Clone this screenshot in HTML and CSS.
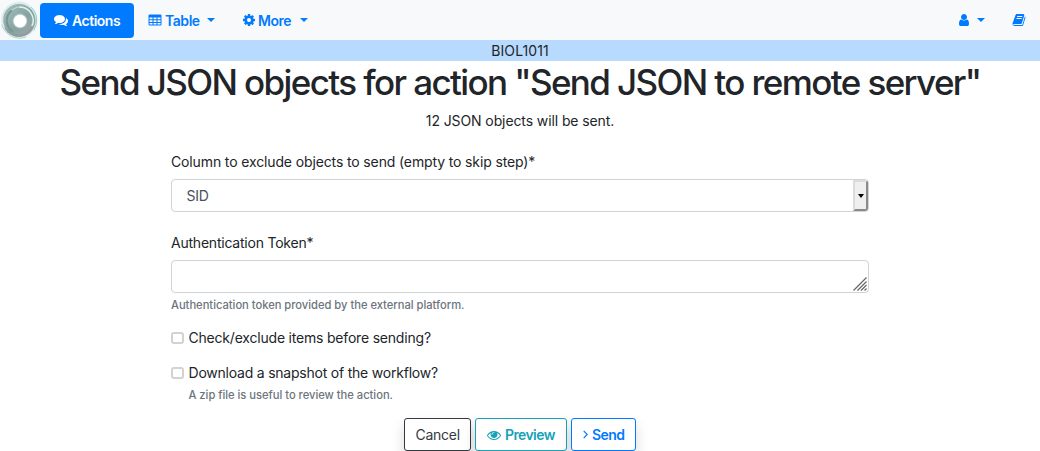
FILE: index.html
```html
<!DOCTYPE html>
<html lang="en">
<head>
<meta charset="utf-8">
<title>Send JSON objects</title>
<link rel="stylesheet" href="styles.css">
</head>
<body>
<nav class="navbar">
  <svg class="logo" viewBox="0 0 40 40">
    <defs><radialGradient id="halo"><stop offset=".82" stop-color="#cfeee8"/><stop offset="1" stop-color="#f8f9fa"/></radialGradient>
    <linearGradient id="ring" x1="0" y1="0" x2="1" y2="1"><stop offset="0" stop-color="#a7c3c0"/><stop offset=".55" stop-color="#84a3a1"/><stop offset="1" stop-color="#a9a9ad"/></linearGradient></defs>
    <circle cx="19.5" cy="20" r="19" fill="url(#halo)"/>
    <circle cx="19" cy="20.5" r="16.5" fill="url(#ring)"/>
    <g fill="none" stroke-linecap="round">
      <path d="M4 27A17 17 0 0 1 28 5" stroke="#dcebe9" stroke-width="1.6"/>
      <path d="M7 22A13 13 0 0 1 28 10" stroke="#c8dbd9" stroke-width="1"/>
      <path d="M20 7A13.500 13.500 0 0 1 32 26" stroke="#e1efed" stroke-width="1.500"/>
      <path d="M11 11A13 13 0 0 0 12 31" stroke="#7a9291" stroke-width="2"/>
      <path d="M31 7A18 18 0 0 1 34 30" stroke="#8fd3c5" stroke-width="1"/>
      <path d="M2 25A18 18 0 0 0 26 37" stroke="#a5d8cf" stroke-width="1"/>
      <path d="M10 32A14 14 0 0 0 32 27" stroke="#929b9e" stroke-width="2"/>
    </g>
    <circle cx="20" cy="21" r="7.600" fill="#a9bfbe"/>
    <circle cx="20" cy="21" r="6.500" fill="#fff"/>
  </svg>
  <a class="nav-item active"><svg class="icon" viewBox="0 0 1792 1792"><path d="M1408 768q0 139-94 257t-256.500 186.500-353.500 68.500q-86 0-176-16-124 88-278 128-36 9-86 16h-3q-11 0-20.500-8t-11.500-21q-1-3-1-6.500t.5-6.500 2-6l2.500-5 3.500-5.500 4-5 4.500-5 4-4.500q5-6 23-25t26-29.500 22.500-29 25-38.500 20.500-44q-124-72-195-177t-71-224q0-139 94-257t256.500-186.500 353.500-68.500 353.500 68.500 256.500 186.500 94 257zm384 256q0 120-71 224.500t-195 176.500q10 24 20.500 44t25 38.500 22.500 29 26 29.500 23 25q1 1 4 4.500t4.500 5 4 5 3.500 5.500l2.500 5 2 6 .5 6.500-1 6.500q-3 14-13 22t-22 7q-50-7-86-16-154-40-278-128-90 16-176 16-271 0-472-132 58 4 88 4 161 0 309-45t264-129q125-92 192-212t67-254q0-77-23-152 129 71 204 178t75 230z"/></svg><span class="t-actions">Actions</span></a>
  <a class="nav-item table"><svg class="icon" viewBox="0 0 14 14"><path fill-rule="evenodd" d="M1.500 1.500h11q1 0 1 1v9q0 1-1 1h-11q-1 0-1-1v-9q0-1 1-1zM1.500 4.500v1.800h3v-1.800zM5.500 4.500v1.800h3v-1.800zM9.500 4.500v1.800h3v-1.800zM1.500 7.200v1.800h3v-1.800zM5.500 7.200v1.800h3v-1.800zM9.500 7.200v1.800h3v-1.800zM1.500 9.900v1.600h3v-1.600zM5.500 9.900v1.600h3v-1.600zM9.500 9.900v1.600h3v-1.600z"/></svg><span class="t-table">Table</span><i class="caret"></i></a>
  <a class="nav-item more"><svg class="icon" viewBox="0 0 1792 1792"><path d="M1152 896q0-106-75-181t-181-75-181 75-75 181 75 181 181 75 181-75 75-181zm512-109v222q0 12-8 23t-20 13l-185 28q-19 54-39 91 35 50 107 138 10 12 10 25t-9 23q-27 37-99 108t-94 71q-12 0-26-9l-138-108q-44 23-91 38-16 136-29 186-7 28-36 28h-222q-14 0-24.500-8.500t-11.500-21.500l-28-184q-49-16-90-37l-141 107q-10 9-25 9-14 0-25-11-126-114-165-168-7-10-7-23 0-12 8-23 15-21 51-66.500t54-70.500q-27-50-41-99l-183-27q-13-2-21-12.500t-8-23.500v-222q0-12 8-23t19-13l186-28q14-46 39-92-40-57-107-138-10-12-10-24 0-10 9-23 26-36 98.500-107.500t94.500-71.500q13 0 26 10l138 107q44-23 91-38 16-136 29-186 7-28 36-28h222q14 0 24.500 8.500t11.500 21.500l28 184q49 16 90 37l142-107q9-9 24-9 13 0 25 10 129 119 165 170 7 8 7 22 0 12-8 23-15 21-51 66.500t-54 70.500q26 50 41 98l183 28q13 2 21 12.500t8 23.500z"/></svg><span class="t-more">More</span><i class="caret"></i></a>
  <a class="nav-item user"><svg class="icon" viewBox="0 0 1792 1792"><path d="M1536 1399q0 109-62.500 187t-150.500 78h-854q-88 0-150.500-78t-62.500-187q0-85 8.500-160.500t31.500-152 58.500-131 94-89 134.500-34.500q131 128 313 128t313-128q76 0 134.500 34.500t94 89 58.500 131 31.500 152 8.500 160.500zm-256-887q0 159-112.500 271.500t-271.500 112.500-271.500-112.500-112.500-271.500 112.500-271.500 271.500-112.500 271.500 112.500 112.500 271.500z"/></svg><i class="caret"></i></a>
  <a class="nav-item book"><svg class="icon" viewBox="0 0 1792 1792"><path d="M1703 478q40 57 18 129l-275 906q-19 64-76.500 107.500t-122.500 43.500h-923q-77 0-148.500-53.500t-99.500-131.500q-24-67-2-127 0-4 3-27t4-37q1-8-3-21.500t-3-19.500q2-11 8-21t16.500-23.500 16.500-23.500q23-38 45-91.500t30-91.500q3-10 .5-30t-.5-28q3-11 17-28t17-23q21-36 42-92t25-90q1-9-2.500-32t.5-28q4-13 22-30.500t22-22.500q19-26 42.500-84.500t27.500-96.500q1-8-3-25.500t-2-26.500q2-8 9-18t18-23 17-21q8-12 16.500-30.500t15-35 16-36 19.500-32 26.500-23.500 36-11.500 47.500 5.500l-1 3q38-9 51-9h761q74 0 114 56t18 130l-274 906q-36 119-71.500 153.500t-128.500 34.500h-869q-27 0-38 15-11 16-1 43 24 70 144 70h923q29 0 56-15.500t35-41.500l300-987q7-22 5-57 38 15 59 43zm-1064 2q-4 13 2 22.500t20 9.500h608q13 0 25.500-9.500t16.500-22.500l21-64q4-13-2-22.500t-20-9.500h-608q-13 0-25.500 9.500t-16.500 22.500zm-83 256q-4 13 2 22.500t20 9.500h608q13 0 25.500-9.500t16.500-22.500l21-64q4-13-2-22.500t-20-9.500h-608q-13 0-25.500 9.500t-16.500 22.500z"/></svg></a>
</nav>
<div class="workflow"><span class="t-course">BIOL1011</span></div>
<h1 class="title"><span class="t-title">Send JSON objects for action "Send JSON to remote server"</span></h1>
<p class="lead"><span class="t-lead">12 JSON objects will be sent.</span></p>
<main class="form">
  <label class="label"><span class="t-column">Column to exclude objects to send (empty to skip step)*</span></label>
  <div class="select"><span class="select-value">SID</span><span class="select-button"><i class="arrow"></i></span></div>
  <label class="label second"><span class="t-auth">Authentication Token*</span></label>
  <div class="textarea"><svg class="grip" width="14" height="14" viewBox="0 0 14 14"><path d="M.5 13.500l13-13M4.500 13.500l9-9M8 13.500l5.500-5.500M11.500 13.500l2-2" stroke="#666" stroke-width="1.200"/></svg></div>
  <small class="help"><span class="t-help">Authentication token provided by the external platform.</span></small>
  <div class="check"><i class="box"></i><span class="t-check">Check/exclude items before sending?</span></div>
  <div class="check"><i class="box"></i><span class="t-download">Download a snapshot of the workflow?</span></div>
  <small class="help indent"><span class="t-zip">A zip file is useful to review the action.</span></small>
</main>
<div class="buttons">
  <a class="btn cancel"><span class="t-cancel">Cancel</span></a>
  <a class="btn preview"><svg class="icon" viewBox="0 0 1792 1792"><path d="M1664 960q-152-236-381-353 61 104 61 225 0 185-131.500 316.500t-316.500 131.500-316.500-131.500-131.500-316.500q0-121 61-225-229 117-381 353 133 205 333.500 326.500t434.500 121.500 434.500-121.500 333.500-326.500zm-720-384q0-20-14-34t-34-14q-125 0-214.500 89.500t-89.500 214.500q0 20 14 34t34 14 34-14 14-34q0-86 61-147t147-61q20 0 34-14t14-34zm848 384q0 34-20 69-140 230-376.500 368.500t-499.500 138.500-499.500-139-376.500-368q-20-35-20-69t20-69q140-229 376.500-368t499.500-139 499.500 139 376.500 368q20 35 20 69z"/></svg><span class="t-preview">Preview</span></a>
  <a class="btn send"><svg class="chevron" width="5" height="9" viewBox="0 0 5 9"><path d="M.7.9l3.500 3.600L.7 8.100" fill="none" stroke="currentColor" stroke-width="1.200"/></svg><span class="t-send">Send</span></a>
</div>
</body>
</html>
```
FILE: styles.css
```css
* { box-sizing: border-box; }
body { margin: 0; height: 451px; overflow: hidden; background: #fff; color: #212529; font: 14px/21px Inter, "Liberation Sans", sans-serif; }
span { white-space: nowrap; }
.navbar { display: flex; align-items: center; height: 40px; background: #f8f9fa; color: #007bff; font-weight: 600; }
.logo { width: 40px; height: 40px; flex: none; }
.nav-item { display: flex; align-items: center; height: 35px; flex: none; }
.icon { width: 14px; height: 14px; flex: none; fill: currentColor; }
.active { width: 94px; padding-left: 14px; gap: 4px; border-radius: 4px; background: #007bff; color: #fff; }
.table { width: 67px; margin-left: 14px; gap: 3px; }
.more { width: 66px; margin-left: 27px; gap: 2px; }
.caret { width: 0; height: 0; margin: -1px 0 0 auto; border: 4.200px solid transparent; border-top-color: currentColor; border-bottom: 0; }
.user { width: 28px; margin-left: auto; }
.book { margin: 0 14px 0 27px; }
.workflow { height: 21px; background: #b8daff; text-align: center; }
.title { margin: 0; height: 42px; font-size: 35px; line-height: 42px; font-weight: 500; text-align: center; letter-spacing: -1.610px; }
.lead { margin: 7px 0 0; text-align: center; height: 21px; }
.form { width: 698px; margin: 20px 0 0 171px; }
.label { display: block; height: 21px; margin-bottom: 7px; }
.select { display: flex; justify-content: space-between; height: 33px; border: 1px solid #ced4da; border-radius: 4px; }
.select-value { padding: 5px 0 0 14.500px; color: #495057; letter-spacing: -.2px; }
.select-button { width: 15px; display: flex; align-items: center; justify-content: center; border: 2px solid; border-color: #dcdcdc #8a8a8a #8a8a8a #dcdcdc; border-radius: 0 3px 3px 0; background: #efefef; }
.arrow { border: 3.500px solid transparent; border-top: 4px solid #000; border-bottom: 0; }
.second { margin-top: 20px; }
.textarea { display: flex; justify-content: flex-end; align-items: flex-end; height: 33px; padding: 1px; border: 1px solid #ced4da; border-radius: 4px; }
.help { display: block; margin-top: 4px; height: 17px; font-size: 11.200px; line-height: 17px; color: #6c757d; font-weight: 500; }
.check { display: flex; align-items: flex-start; gap: 5px; height: 21px; margin-top: 14px; line-height: 19px; }
.box { width: 12.500px; height: 12px; margin-top: 4px; flex: none; border: 2px solid #d2d2d2; border-radius: 3px; background: #fff; }
.indent { margin: 3px 0 0 17.500px; }
.buttons { display: flex; gap: 4px; margin: 14px 0 0 404px; }
.btn { display: flex; align-items: center; height: 33px; padding-left: 11px; border: 1px solid; border-radius: 3px; box-shadow: 0 7px 14px rgba(0,0,0,.15); background: #fff; }
.cancel { width: 67px; padding-left: 10.500px; color: #343a40; }
.preview { width: 92px; gap: 4px; color: #17a2b8; font-weight: 600; }
.send { width: 65px; gap: 4px; color: #007bff; font-weight: 600; }
.t-actions { letter-spacing: -.480px; }
.t-table, .t-more { letter-spacing: -.450px; }
.t-course { letter-spacing: .080px; }
.t-lead { letter-spacing: -.100px; }
.t-column { letter-spacing: -.130px; }
.t-auth { letter-spacing: -.220px; }
.t-help, .t-zip { letter-spacing: -.025px; }
.t-check { letter-spacing: -.200px; }
.t-download { letter-spacing: -.220px; }
.t-cancel { letter-spacing: -.250px; }
.t-preview, .t-send { letter-spacing: -.600px; }
```
